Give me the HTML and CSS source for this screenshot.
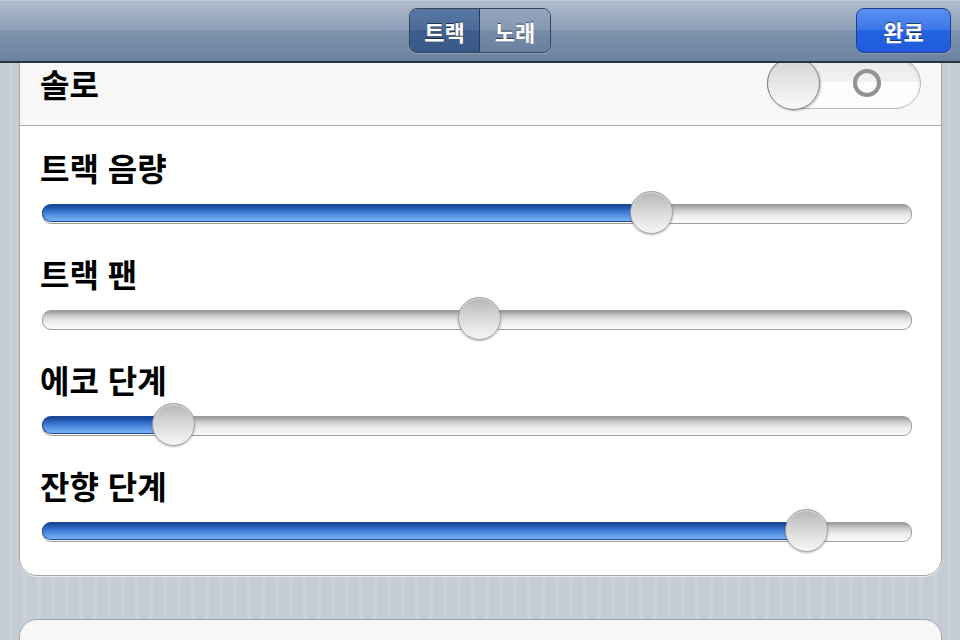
FILE: index.html
```html
<!DOCTYPE html>
<html lang="ko">
<head>
<meta charset="utf-8">
<title>트랙 설정</title>
<link rel="stylesheet" href="styles.css">
</head>
<body>
<header class="nav">
  <div class="nav-left"></div>
  <div class="seg">
    <span class="seg-btn active">트랙</span>
    <span class="seg-btn">노래</span>
  </div>
  <div class="nav-right"><button class="done">완료</button></div>
</header>
<main class="content">
  <section class="card">
    <div class="solo">
      <span class="label solo-label">솔로</span>
      <div class="switch"><div class="knob"></div><div class="off-o"></div></div>
    </div>
    <div class="sliders">
      <div class="srow">
        <div class="label">트랙 음량</div>
        <div class="slider" style="--v:0.711"><div class="fill"></div><div class="thumb"></div></div>
      </div>
      <div class="srow">
        <div class="label">트랙 팬</div>
        <div class="slider" style="--v:0.503"><div class="thumb"></div></div>
      </div>
      <div class="srow">
        <div class="label">에코 단계</div>
        <div class="slider" style="--v:0.133"><div class="fill"></div><div class="thumb"></div></div>
      </div>
      <div class="srow">
        <div class="label">잔향 단계</div>
        <div class="slider" style="--v:0.899"><div class="fill"></div><div class="thumb"></div></div>
      </div>
    </div>
  </section>
  <section class="card next"></section>
</main>
</body>
</html>
```

FILE: styles.css
```css
* { box-sizing: border-box; }
html, body { margin: 0; padding: 0; }
body {
  width: 960px;
  height: 640px;
  overflow: hidden;
  font-family: "Noto Sans CJK KR", "Noto Sans", sans-serif;
  background: #c5ccd4;
}

.nav {
  height: 63px;
  display: grid;
  grid-template-columns: 1fr auto 1fr;
  align-items: center;
  background: linear-gradient(to bottom, #cfd6e0 0, #b1bdcd 1px, #8b9db5 30px, #7d91ac 31px, #6c829f 61px, #2b333d 61px, #2b333d 63px);
  padding-bottom: 2px;
}
.nav-right { display: flex; justify-content: flex-end; padding-right: 9px; }

.seg {
  display: flex;
  height: 45px;
  border: 1px solid #34445c;
  border-radius: 8px;
  overflow: hidden;
  box-shadow: 0 1px 0 rgba(255,255,255,0.25);
}
.seg-btn {
  display: flex;
  align-items: center;
  justify-content: center;
  width: 70px;
  color: #fff;
  font-weight: 700;
  font-size: 22px;
  text-shadow: 0 -1px 0 rgba(0,0,0,0.55);
  background: linear-gradient(to bottom, #94a6bd 0, #8497b1 50%, #768ba8 50%, #6a809e 100%);
}
.seg-btn.active {
  width: 70px;
  border-right: 1px solid #2c3c58;
  background: linear-gradient(to bottom, #5676a3 0, #4b6b99 50%, #3f5f8e 50%, #395887 100%);
}

.done {
  width: 95px;
  height: 45px;
  border: 1px solid #1d3f8c;
  border-radius: 8px;
  color: #fff;
  font-family: inherit;
  font-weight: 700;
  font-size: 22px;
  text-shadow: 0 -1px 0 rgba(0,0,0,0.5);
  background: linear-gradient(to bottom, #5b8ff0 0, #3b74e8 50%, #2463e2 50%, #1f5bdb 100%);
  box-shadow: 0 1px 0 rgba(255,255,255,0.25);
  padding: 0;
}

.content {
  height: 577px;
  overflow: hidden;
  padding: 0 18px 0 19px;
  background: repeating-linear-gradient(90deg, #c5ccd4 0, #c5ccd4 9px, #cbd2d9 9px, #cbd2d9 13px, #c5ccd4 13px, #c5ccd4 14px);
}

.card {
  margin-top: -24px;
  border: 1px solid #a6a6a6;
  border-radius: 18px;
  background: #fff;
  overflow: hidden;
  box-shadow: 0 1px 0 rgba(255,255,255,0.6);
}
.card.next {
  margin-top: 43px;
  height: 60px;
  background: #f7f7f7;
}

.label {
  color: #000;
  font-weight: 700;
  font-size: 32px;
  line-height: 42px;
}
.solo-label { line-height: 34px; }

.solo {
  height: 86px;
  display: flex;
  align-items: center;
  justify-content: space-between;
  padding: 0 20px 0 20px;
  background: #f7f7f7;
  border-bottom: 1px solid #acacac;
}

.switch {
  position: relative;
  width: 154px;
  height: 52px;
  border-radius: 26px;
  border: 1px solid #b9b9b9;
  background: linear-gradient(to bottom, #e9e9e9 0, #f1f1f1 45%, #fdfdfd 50%, #fcfcfc 100%);
  box-shadow: inset 0 2px 3px rgba(0,0,0,0.12);
}
.knob {
  position: absolute;
  left: -1px;
  top: -1px;
  width: 53px;
  height: 53px;
  border-radius: 50%;
  border: 1px solid #7d7d7d;
  background: linear-gradient(to bottom, #d3d3d3 0, #e6e6e6 50%, #fbfbfb 100%);
  box-shadow: 1px 1px 2px rgba(0,0,0,0.25);
}
.off-o {
  position: absolute;
  left: 85px;
  top: 11px;
  width: 28px;
  height: 28px;
  border-radius: 50%;
  border: 4px solid #929292;
}

.sliders {
  padding: 20px 29px 22px 20px;
  display: flex;
  flex-direction: column;
  gap: 17px;
}
.srow {
  display: flex;
  flex-direction: column;
  gap: 3px;
}
.slider {
  position: relative;
  height: 44px;
  margin-left: 2px;
}
.slider::before {
  content: "";
  position: absolute;
  left: 0;
  right: 0;
  top: 13px;
  height: 18px;
  border-radius: 9px;
  border: 1px solid #9d9d9d;
  background: linear-gradient(to bottom, #9a9a9a 0, #cfcfcf 30%, #ececec 60%, #fbfbfb 100%);
}
.fill {
  position: absolute;
  left: 0;
  top: 13px;
  height: 18px;
  width: calc(21.5px + var(--v) * (100% - 43px));
  border-radius: 9px 0 0 9px;
  border: 1px solid #1b4a9c;
  border-right: 0;
  background: linear-gradient(to bottom, #15428f 0, #2f67c2 30%, #5590e3 65%, #7ab3f4 100%);
}
.thumb {
  position: absolute;
  top: 0;
  left: calc(var(--v) * (100% - 43px));
  width: 43px;
  height: 43px;
  border-radius: 50%;
  border: 1px solid #9e9e9e;
  background: linear-gradient(to bottom, #b6b6b6 0, #d2d2d2 40%, #e9e9e9 75%, #f5f5f5 100%);
  box-shadow: 0 1px 2px rgba(0,0,0,0.3), inset 0 1px 0 rgba(255,255,255,0.5);
}
```
